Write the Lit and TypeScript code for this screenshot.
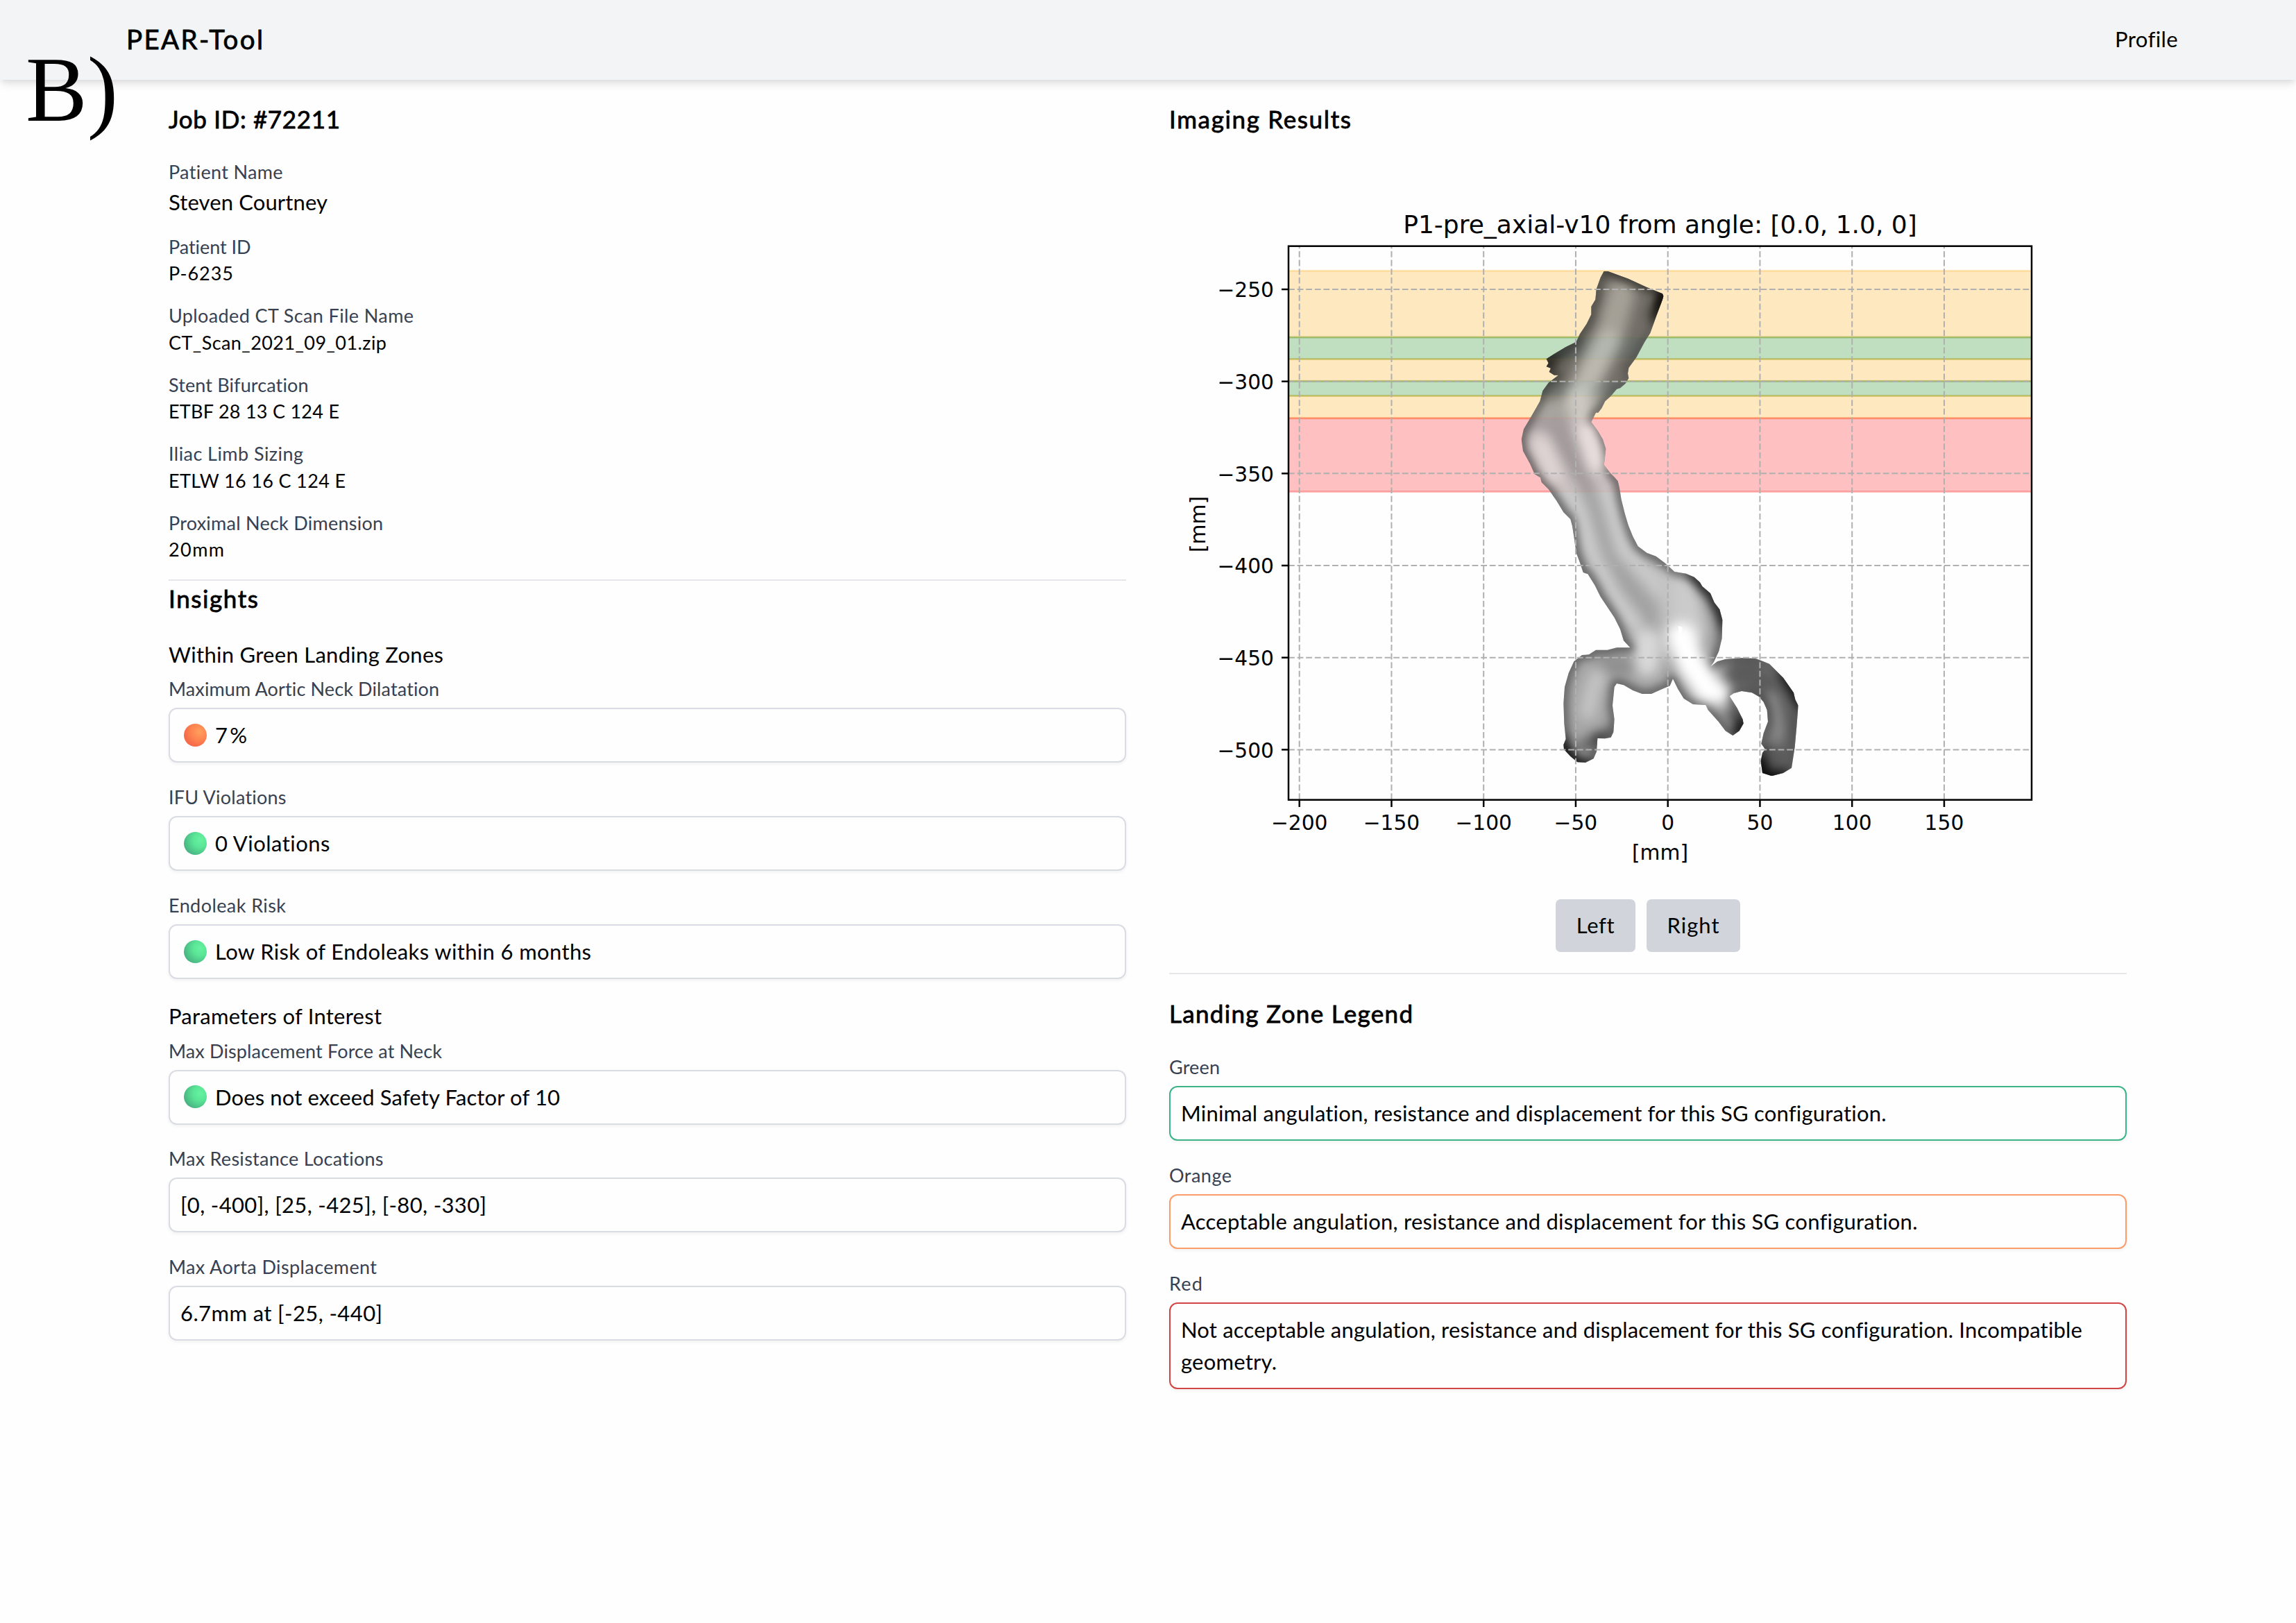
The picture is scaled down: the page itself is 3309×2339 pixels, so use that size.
import { LitElement, html, svg, css, nothing } from "lit";
import { customElement, property } from "lit/decorators.js";

/** A single line of text tracked out (or in) to span a given advance width. */
@customElement("fit-text")
class FitText extends LitElement {
  @property({ type: Number }) w = 0;
  @property() text = "";

  static styles = css`
    :host { display: inline-block; white-space: nowrap; }
    .run { display: inline-block; }
  `;

  firstUpdated() {
    const run = this.renderRoot.querySelector(".run") as HTMLElement;
    const natural = run.getBoundingClientRect().width;
    if (this.w && this.text.length > 1) {
      run.style.letterSpacing = `${(this.w - natural) / (this.text.length - 1)}px`;
    }
  }

  render() {
    return html`<span class="run">${this.text}</span>`;
  }
}

type Row = { label: string; lw: number; value: string; vw: number; tone?: string };

const details: Row[] = [
  { label: "Patient Name", lw: 165, value: "Steven Courtney", vw: 229, tone: "big" },
  { label: "Patient ID", lw: 119, value: "P-6235", vw: 93 },
  { label: "Uploaded CT Scan File Name", lw: 353, value: "CT_Scan_2021_09_01.zip", vw: 314 },
  { label: "Stent Bifurcation", lw: 202, value: "ETBF 28 13 C 124 E", vw: 246 },
  { label: "Iliac Limb Sizing", lw: 194, value: "ETLW 16 16 C 124 E", vw: 255 },
  { label: "Proximal Neck Dimension", lw: 309, value: "20mm", vw: 80 },
];

const zones: Row[] = [
  { label: "Maximum Aortic Neck Dilatation", lw: 391, value: "7%", vw: 46, tone: "orange" },
  { label: "IFU Violations", lw: 170, value: "0 Violations", vw: 166, tone: "green" },
  { label: "Endoleak Risk", lw: 169, value: "Low Risk of Endoleaks within 6 months", vw: 542, tone: "green" },
];

const params: Row[] = [
  { label: "Max Displacement Force at Neck", lw: 394, value: "Does not exceed Safety Factor of 10", vw: 497, tone: "green" },
  { label: "Max Resistance Locations", lw: 310, value: "[0, -400], [25, -425], [-80, -330]", vw: 441 },
  { label: "Max Aorta Displacement", lw: 300, value: "6.7mm at [-25, -440]", vw: 291 },
];

const legend = [
  { name: "Green", w: 73, cls: "lg-green", lines: [{ t: "Minimal angulation, resistance and displacement for this SG configuration.", w: 1017 }] },
  { name: "Orange", w: 90, cls: "lg-orange", lines: [{ t: "Acceptable angulation, resistance and displacement for this SG configuration.", w: 1062 }] },
  {
    name: "Red", w: 48, cls: "lg-red", lines: [
      { t: "Not acceptable angulation, resistance and displacement for this SG configuration. Incompatible", w: 1300 },
      { t: "geometry.", w: 138 },
    ],
  },
];

const xTicks = [-200, -150, -100, -50, 0, 50, 100, 150];
const yTicks = [-250, -300, -350, -400, -450, -500];
const px = (v: number) => 2403.7 + v * 2.655;
const py = (v: number) => 417 + (-250 - v) * 2.6535;
const num = (v: number) => (v < 0 ? "\u2212" + -v : String(v));

const bands = [
  { a: 390.3, b: 486, c: "#ffa500" },
  { a: 486, b: 517.5, c: "#008000" },
  { a: 517.5, b: 549.3, c: "#ffa500" },
  { a: 549.3, b: 570.5, c: "#008000" },
  { a: 570.5, b: 602.7, c: "#ffa500" },
  { a: 602.7, b: 708.6, c: "#ff0000" },
];

/* Silhouette of the aorta and the iliac branches, in third-pixel units. */
const vessel =
  "M515 92 L530 92 620 125 700 162 768 190 772 200 768 215 740 290 715 360 690 400 655 465 622 510 618 535 622 555 608 578 585 598 570 602 545 632 520 655 505 685 490 704 480 704 460 745 490 785 510 820 523 860 520 890 515 930 545 968 562 985 575 1000 582 1030 590 1080 605 1140 620 1190 640 1240 662 1282 700 1310 740 1325 780 1355 820 1392 870 1400 905 1415 930 1438 940 1455 975 1485 992 1525 1015 1555 1027 1600 1025 1680 1012 1735 990 1782 975 1803 1005 1780 1040 1770 1110 1765 1170 1767 1230 1790 1290 1850 1335 1915 1342 1945 1355 1970 1348 2060 1340 2150 1326 2240 1290 2262 1240 2275 1200 2262 1193 2210 1200 2175 1212 2160 1195 2135 1205 2090 1224 2040 1220 1990 1205 1955 1185 1932 1155 1915 1110 1908 1075 1918 1058 1930 1090 1980 1115 2030 1118 2048 1100 2080 1072 2100 1040 2080 1010 2040 965 1990 955 1968 900 1965 860 1940 835 1900 813 1855 800 1885 760 1902 720 1920 680 1920 640 1905 600 1882 570 1875 560 1890 552 1970 560 2030 556 2085 545 2108 520 2113 487 2112 483 2170 470 2200 435 2217 400 2215 370 2190 342 2160 340 2140 350 2115 343 2050 340 1960 345 1890 362 1830 385 1780 420 1752 450 1750 480 1730 530 1730 570 1720 628 1720 600 1690 585 1640 560 1590 530 1545 500 1500 475 1450 445 1402 425 1395 410 1350 395 1310 385 1240 378 1195 370 1165 340 1135 310 1085 275 1035 245 1005 240 985 215 970 195 925 165 870 158 820 168 775 195 730 215 695 238 655 250 610 275 575 318 542 300 542 278 528 285 512 266 505 275 490 266 472 300 450 350 420 395 398 410 365 440 320 460 280 460 245 478 215 482 170 500 120Z";

@customElement("app-root")
class AppRoot extends LitElement {
  static styles = css`
    :host {
      display: block;
      position: relative;
      width: 3309px;
      height: 2339px;
      overflow: hidden;
      background: #fefefe;
      color: #000;
      font-family: Lato, "Open Sans", sans-serif;
      font-size: 31px;
    }
    .bar {
      display: flex;
      justify-content: space-between;
      align-items: center;
      box-sizing: border-box;
      height: 115px;
      padding: 0 170px 3.5px 182px;
      background: #f3f4f6;
      box-shadow: 0 8px 12px -2px rgba(0, 0, 0, 0.1), 0 4px 8px -2px rgba(0, 0, 0, 0.06);
    }
    .brand { font-size: 38.5px; font-weight: 400; -webkit-text-stroke: 0.8px #000; }
    .panel {
      position: absolute;
      left: 37px;
      top: 62.5px;
      font: 133px/1 "Liberation Serif", serif;
    }
    .cols {
      display: grid;
      grid-template-columns: 1380px 1380px;
      column-gap: 62px;
      padding: 29px 0 0 243px;
      align-items: start;
    }
    .col { display: flex; flex-direction: column; }
    h2 { margin: 0; font-size: 35px; line-height: 54px; height: 54px; font-weight: 400; -webkit-text-stroke: 0.8px #000; }
    h3 { margin: 0; font-size: 31px; line-height: 46.3px; height: 46.3px; font-weight: 400; }
    .label { font-size: 27px; line-height: 38.5px; height: 38.5px; color: #374151; }
    .details { display: flex; flex-direction: column; gap: 22.6px; margin-top: 31.2px; }
    .value { font-size: 27px; line-height: 38.5px; height: 38.5px; }
    .value.big { font-size: 31px; line-height: 46.3px; height: 46.3px; }
    .rule { height: 2px; background: #e5e7eb; }
    .rule.left { margin-top: 23.4px; }
    h2.insights { line-height: 50px; height: 50px; }
    .within { margin-top: 33px; }
    .interest { margin-top: 30.4px; }
    .stack { display: flex; flex-direction: column; gap: 30.8px; margin-top: 7.8px; }
    .box {
      display: flex;
      align-items: center;
      box-sizing: border-box;
      height: 79px;
      margin-top: 7.5px;
      padding: 0 16px 1px 15px;
      border: 2px solid #d9dce3;
      border-radius: 12px;
      background: #fefefe;
      box-shadow: 0 2px 5px rgba(0, 0, 0, 0.06);
    }
    .ball { width: 33px; height: 33px; margin: 0 12px 0 5px; border-radius: 50%; flex: none; }
    .ball.orange { background: radial-gradient(circle at 68% 35%, #ff9f5e 0, #fd8550 38%, #f66a49 70%, #e76d62 100%); }
    .ball.green { background: radial-gradient(circle at 72% 35%, #66f2a0 0, #5be697 32%, #4bbd86 68%, #479380 100%); }
    .chart { display: block; margin-top: 2px; width: 1379px; height: 1060px; }
    .chart text { font-family: "DejaVu Sans", sans-serif; font-size: 29.7px; }
    .chart .title { font-size: 36px; }
    .buttons { display: flex; justify-content: center; gap: 16px; margin-top: 36px; }
    button {
      height: 76px;
      margin: 0;
      padding: 0 0 3px;
      border: 0;
      border-radius: 7px;
      background: #d1d5db;
      color: #000;
      font: 31px Lato, "Open Sans", sans-serif;
    }
    .b-left { width: 115px; }
    .b-right { width: 135px; }
    .rule.right { margin-top: 30.3px; }
    .legend-title { margin-top: 29px; }
    .stack.legend { gap: 29.2px; margin-top: 31.7px; }
    .box.lines { display: flex; flex-direction: column; height: auto; align-items: flex-start; padding: 14px 16px 15.5px 15px; line-height: 46px; margin-top: 7.6px; margin-bottom: 1.3px; }
    .lines fit-text { height: 45.8px; }
    .lg-green.box { border-color: #3cb487; }
    .lg-orange.box { border-color: #fb9d6a; }
    .lg-red.box { border-color: #d14545; }
  `;

  private row(r: Row) {
    return html`<div>
      <div class="label"><fit-text .w=${r.lw} .text=${r.label}></fit-text></div>
      <div class="box">
        ${r.tone ? html`<span class="ball ${r.tone}"></span>` : nothing}
        <fit-text .w=${r.vw} .text=${r.value}></fit-text>
      </div>
    </div>`;
  }

  private bandRects() {
    return bands.map(
      (b) => svg`<rect x="1850" y=${b.a} width="1090" height=${b.b - b.a} fill=${b.c} fill-opacity="0.245" stroke=${b.c} stroke-opacity="0.25" stroke-width="2.8"></rect>`
    );
  }

  private chart() {
    return html`<svg class="chart" viewBox="1685 200 1379 1060">
      <defs>
        <clipPath id="plot"><rect x="1857" y="354.7" width="1071" height="798"></rect></clipPath>
        <clipPath id="body"><path d=${vessel}></path></clipPath>
        <clipPath id="bodyPx"><path d=${vessel} transform="translate(2140 360) scale(.33333)"></path></clipPath>
        <filter id="b2" filterUnits="userSpaceOnUse" x="0" y="0" width="1500" height="2400" color-interpolation-filters="sRGB"><feGaussianBlur stdDeviation="26"></feGaussianBlur></filter>
        <filter id="b3" filterUnits="userSpaceOnUse" x="0" y="0" width="1500" height="2400" color-interpolation-filters="sRGB"><feGaussianBlur stdDeviation="17"></feGaussianBlur></filter>
      </defs>
      <g clip-path="url(#plot)">${this.bandRects()}</g>
      <g transform="translate(2140 360) scale(.33333)">
        <g clip-path="url(#body)" fill="none" stroke-linecap="round" stroke-linejoin="round">
          <rect x="0" y="0" width="1500" height="2400" fill="#a6a6a6"></rect>
          <g filter="url(#b2)">
            <path d="M640 60L570 330 490 480 280 500" stroke="#6e6d6b" stroke-width="290"></path>
            <path d="M590 190L540 370 450 540" stroke="#a3a19c" stroke-width="120"></path>
            <path d="M530 400L460 540 400 640" stroke="#bab9b5" stroke-width="110"></path>
            <path d="M400 640L430 760" stroke="#cdcbc8" stroke-width="100"></path>
            <path d="M410 740L450 840 500 950 560 1150 600 1290 700 1400 800 1520" stroke="#c9c9c9" stroke-width="84"></path>
            <path d="M230 830L310 980 420 1130 450 1260 530 1420 640 1600" stroke="#cbcaca" stroke-width="96"></path>
            <path d="M320 750L370 900 470 1110 530 1310 610 1460 710 1590" stroke="#a0a0a0" stroke-width="50"></path>
            <path d="M700 1690L700 1790" stroke="#d8d8d8" stroke-width="110"></path>
            <path d="M840 1450L880 1640" stroke="#cbcbcb" stroke-width="150"></path>
            <path d="M780 1400L790 1740" stroke="#c2c2c2" stroke-width="60"></path>
            <path d="M510 1800L610 1800" stroke="#8e8e8e" stroke-width="80"></path>
            <path d="M490 1840L460 1920 445 2000" stroke="#c4c4c4" stroke-width="70"></path>
            <path d="M420 2150L530 2090" stroke="#555" stroke-width="46"></path>
            <path d="M1100 1835L1150 1830 1250 1910 1290 2040 1260 2220" stroke="#5b5b5b" stroke-width="130"></path>
            <path d="M1240 1930L1270 2060 1265 2120" stroke="#959595" stroke-width="46"></path>
            <path d="M1070 2010L1110 2070" stroke="#555" stroke-width="60"></path>
            <path d="M380 425L280 490" stroke="#4a4a4a" stroke-width="46"></path>
          </g>
          <path d=${vessel} stroke="#262626" stroke-width="42" stroke-opacity=".5" filter="url(#b3)"></path>
          <g filter="url(#b2)">
            <path d="M850 1670L890 1790 965 1900" stroke="#fff" stroke-width="120"></path>
            <path d="M850 1730L920 1840 1010 1920" stroke="#fff" stroke-width="90"></path>
            <path d="M440 780L485 930" stroke="#ece8e8" stroke-width="70"></path>
            <path d="M240 840L300 970" stroke="#e0dcdc" stroke-width="66"></path>
            <path d="M800 150L740 290" stroke="#000" stroke-width="50"></path>
            <path d="M520 60L800 170" stroke="#222" stroke-width="34"></path>
            <path d="M300 460L250 520" stroke="#111" stroke-width="30"></path>
            <path d="M900 1390L1000 1500 1045 1620" stroke="#111" stroke-width="46"></path>
            <path d="M1300 1830L1375 1970" stroke="#000" stroke-width="46"></path>
            <path d="M1180 2200L1210 2290 1290 2290" stroke="#000" stroke-width="60"></path>
            <path d="M330 2130L380 2230 450 2240" stroke="#000" stroke-width="50"></path>
            <path d="M1130 2030L1100 2100" stroke="#000" stroke-width="40"></path>
          </g>
          <path d="M765 185L772 215 750 240" stroke="#0a0a0a" stroke-width="30" filter="url(#b3)"></path>
        </g>
        <path d="M836 1626L854 1632 850 1650 842 1675 838 1648Z" fill="#fff"></path>
      </g>
      <g clip-path="url(#bodyPx)" opacity="0.14">${this.bandRects()}</g>
      <g stroke="#b0b0b0" stroke-width="2" stroke-dasharray="8.8 3.8">
        ${xTicks.map((v) => svg`<line x1=${px(v)} x2=${px(v)} y1="1152" y2="355"></line>`)}
        ${yTicks.map((v) => svg`<line y1=${py(v)} y2=${py(v)} x1="1857" x2="2928"></line>`)}
      </g>
      <rect x="1857" y="354.7" width="1071" height="798" fill="none" stroke="#000" stroke-width="2.5"></rect>
      <g stroke="#000" stroke-width="2.5">
        ${xTicks.map((v) => svg`<line x1=${px(v)} x2=${px(v)} y1="1152" y2="1163"></line>`)}
        ${yTicks.map((v) => svg`<line y1=${py(v)} y2=${py(v)} x1="1847" x2="1857"></line>`)}
      </g>
      <text class="title" x="2392.5" y="336" text-anchor="middle">P1-pre_axial-v10 from angle: [0.0, 1.0, 0]</text>
      ${xTicks.map((v) => svg`<text x=${px(v)} y="1196.3" text-anchor="middle">${num(v)}</text>`)}
      ${yTicks.map((v) => svg`<text x="1836" y=${py(v) + 11.3} text-anchor="end">${num(v)}</text>`)}
      <text x="2392.5" y="1239" text-anchor="middle">[mm]</text>
      <text transform="translate(1736.5 755.5) rotate(-90)" text-anchor="middle">[mm]</text>
    </svg>`;
  }

  render() {
    return html`
      <header class="bar">
        <span class="brand"><fit-text .w=${197} .text=${"PEAR-Tool"}></fit-text></span>
        <fit-text .w=${90} .text=${"Profile"}></fit-text>
      </header>
      <div class="panel">B)</div>
      <main class="cols">
        <section class="col">
          <h2><fit-text .w=${247} .text=${"Job ID: #72211"}></fit-text></h2>
          <div class="details">
            ${details.map((d) => html`<div>
              <div class="label"><fit-text .w=${d.lw} .text=${d.label}></fit-text></div>
              <div class="value ${d.tone ?? ""}"><fit-text .w=${d.vw} .text=${d.value}></fit-text></div>
            </div>`)}
          </div>
          <div class="rule left"></div>
          <h2 class="insights"><fit-text .w=${129} .text=${"Insights"}></fit-text></h2>
          <h3 class="within"><fit-text .w=${396} .text=${"Within Green Landing Zones"}></fit-text></h3>
          <div class="stack">${zones.map((r) => this.row(r))}</div>
          <h3 class="interest"><fit-text .w=${307} .text=${"Parameters of Interest"}></fit-text></h3>
          <div class="stack">${params.map((r) => this.row(r))}</div>
        </section>
        <section class="col">
          <h2><fit-text .w=${262} .text=${"Imaging Results"}></fit-text></h2>
          ${this.chart()}
          <div class="buttons">
            <button class="b-left"><fit-text .w=${54} .text=${"Left"}></fit-text></button>
            <button class="b-right"><fit-text .w=${75} .text=${"Right"}></fit-text></button>
          </div>
          <div class="rule right"></div>
          <h2 class="legend-title"><fit-text .w=${351} .text=${"Landing Zone Legend"}></fit-text></h2>
          <div class="stack legend">
            ${legend.map((l) => html`<div>
              <div class="label"><fit-text .w=${l.w} .text=${l.name}></fit-text></div>
              <div class="box lines ${l.cls}">
                ${l.lines.map((t) => html`<fit-text .w=${t.w} .text=${t.t}></fit-text>`)}
              </div>
            </div>`)}
          </div>
        </section>
      </main>
    `;
  }
}
